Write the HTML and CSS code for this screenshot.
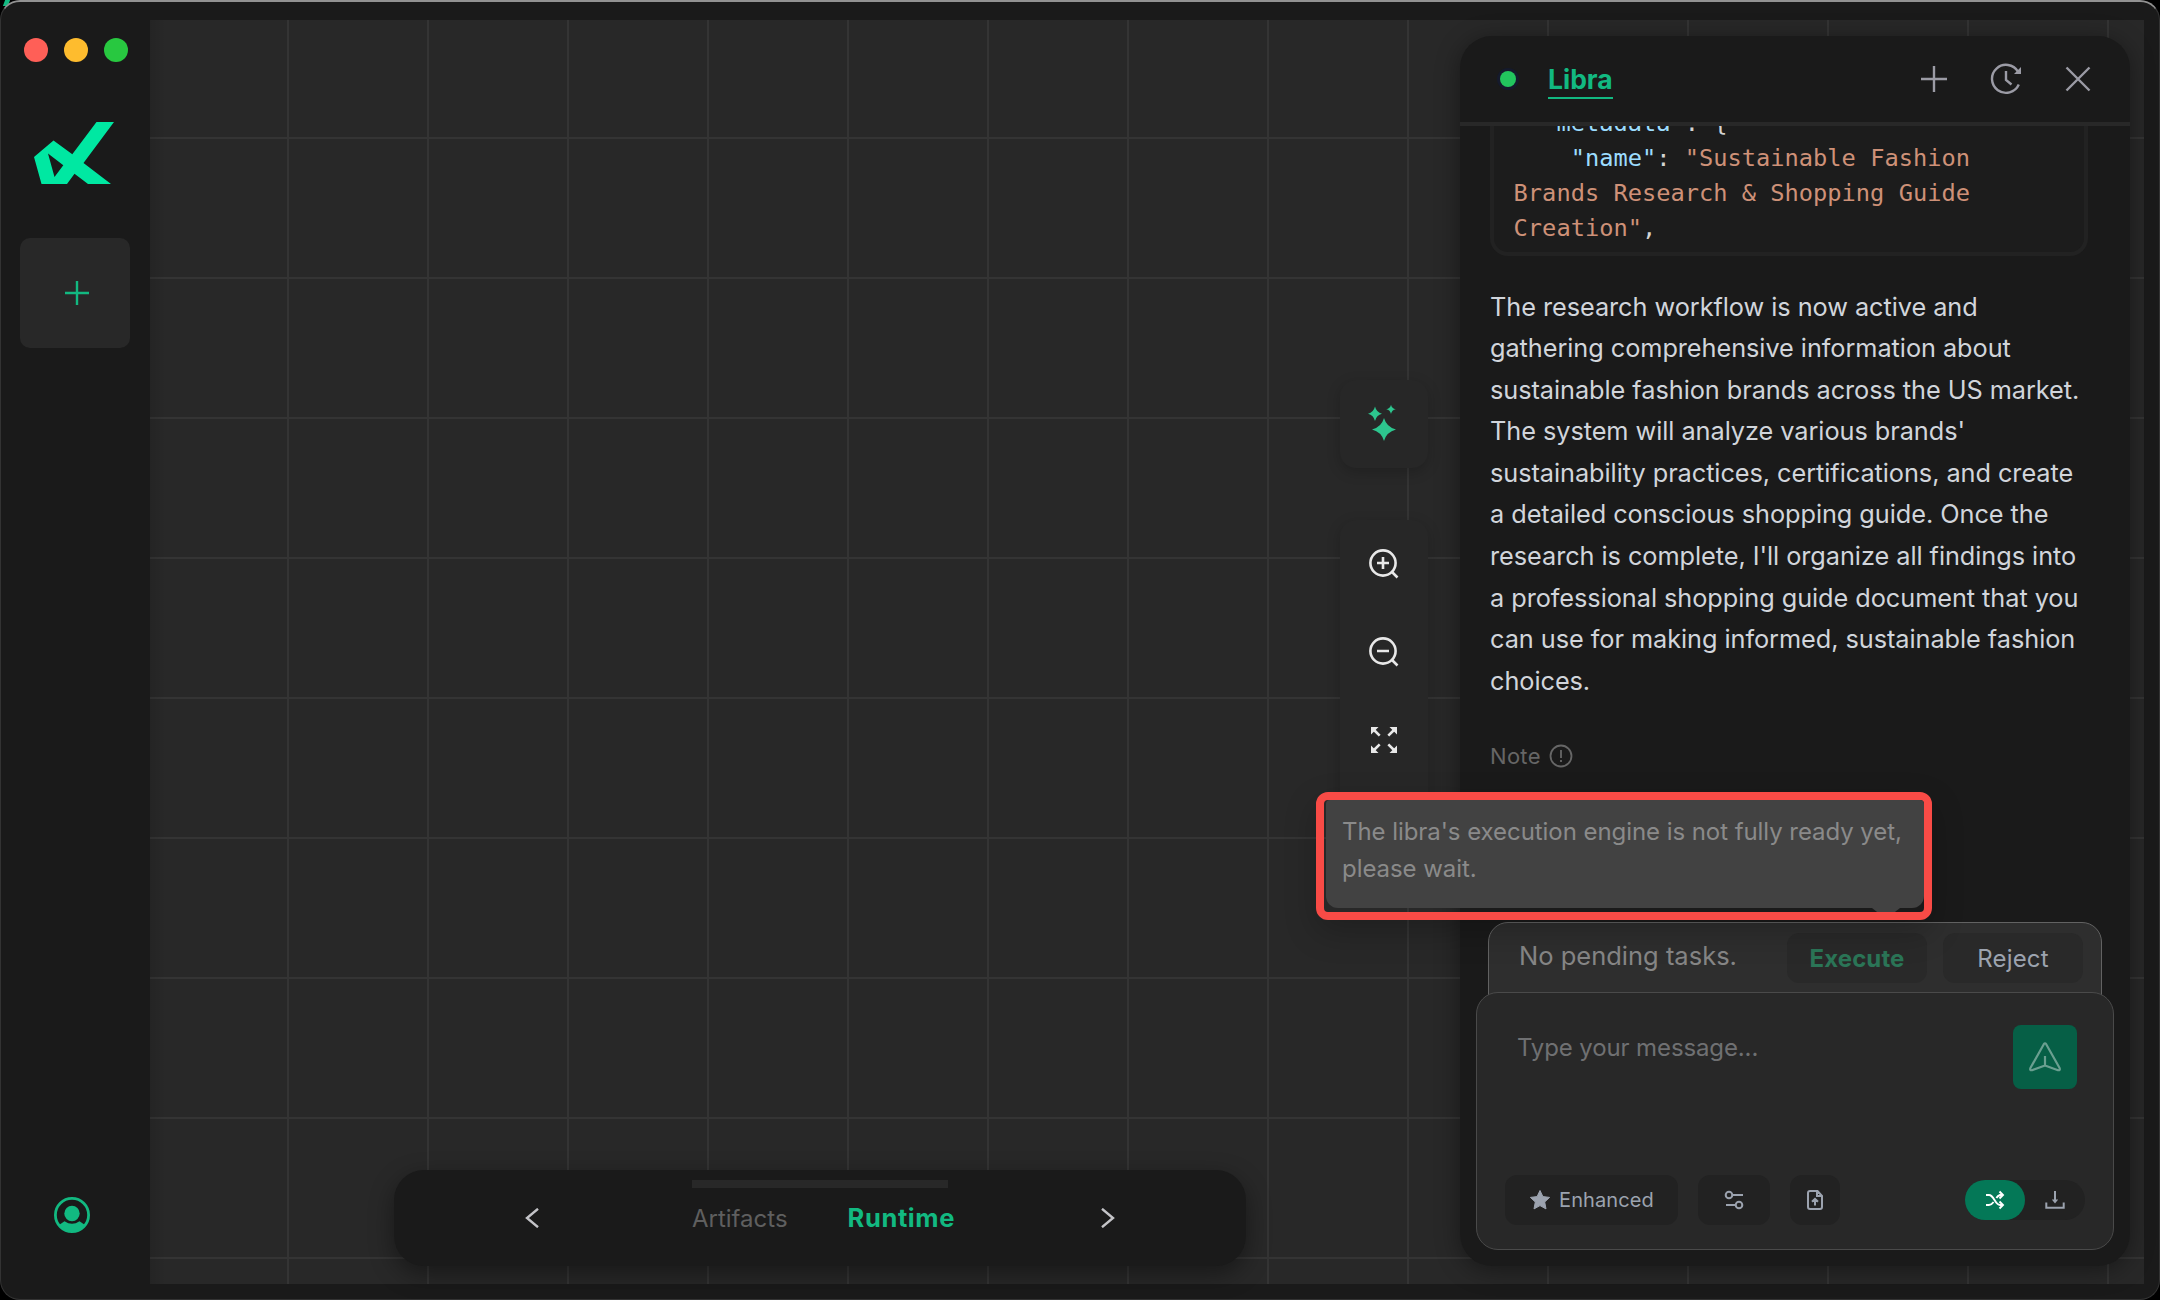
FILE: index.html
```html
<!DOCTYPE html>
<html lang="en">
<head>
<meta charset="utf-8">
<title>Libra</title>
<link rel="stylesheet" href="styles.css">
</head>
<body>
<div class="backdrop-mark"></div>
<div class="window">
  <aside class="sidebar">
    <div class="lights"><i class="red"></i><i class="yellow"></i><i class="green"></i></div>
    <svg class="logo" viewBox="34 122 80 62" width="80" height="62"><path fill="#00e8a2" fill-rule="evenodd" d="M96.5 122H114L83.5 163 111 184H88L74.5 173.7 67 184H41.5L34 157 53.5 140.5 72.3 154.3ZM48 153.5 54.5 177 63.3 165.3Z"/></svg>
    <button class="new-tab"><svg width="26" height="26" viewBox="0 0 26 26"><path d="M13 1v24M1 13h24" stroke="#12b981" stroke-width="2.4"/></svg></button>
    <svg class="avatar" width="36" height="36" viewBox="0 0 36 36"><circle cx="18" cy="18" r="16.6" fill="none" stroke="#12b981" stroke-width="2.8"/><circle cx="18" cy="16.5" r="7.7" fill="#12b981"/><path fill="#12b981" d="M5 28 10.5 24.2Q18 29.5 25.5 24.2L31 28Q26 35 18 35T5 28Z"/></svg>
  </aside>

  <main class="canvas">
    <div class="tools tools-ai">
      <svg width="30" height="38" viewBox="0 0 30 38" fill="#2dc58e"><path d="M17 14Q19.500 23 29 25.500 19.500 28 17 37 14.500 28 5 25.500 14.500 23 17 14Z"/><path d="M8 2.500Q9.400 8.300 15 9.700 9.400 11.100 8 17 6.600 11.100 1 9.700 6.600 8.300 8 2.500Z"/><path d="M24 .7Q24.800 4.400 28.800 5.200 24.800 6 24 10 23.200 6 19.200 5.200 23.200 4.400 24 .7Z"/></svg>
    </div>
    <div class="tools tools-view">
      <span><svg width="32" height="32" viewBox="0 0 32 32"><path d="M23.500 23.500 29.500 29.500M15 9v12M9 15h12" /><circle cx="15" cy="15" r="12.600"/></svg></span>
      <span><svg width="32" height="32" viewBox="0 0 32 32"><path d="M23.500 23.500 29.500 29.500M9 15h12"/><circle cx="15" cy="15" r="12.600"/></svg></span>
      <span><svg width="28" height="28" viewBox="0 0 28 28"><path d="M4 4 9.700 9.700M24 4 18.300 9.700M4 24 9.700 18.300M24 24 18.300 18.300"/><path class="solid" d="M1 1H8.500L1 8.500ZM27 1V8.500L19.500 1ZM1 27V19.500L8.500 27ZM27 27H19.500L27 19.500Z"/></svg></span>
    </div>

    <nav class="dock">
      <div class="grip"></div>
      <div class="dock-row">
        <svg class="chev" width="14" height="20" viewBox="0 0 14 20"><path d="M13 .8 2 10 13 19.200"/></svg>
        <div class="tabs"><span class="tab">Artifacts</span><span class="tab active">Runtime</span></div>
        <svg class="chev" width="14" height="20" viewBox="0 0 14 20"><path d="M1 .8 12 10 1 19.200"/></svg>
      </div>
    </nav>

    <section class="panel">
      <header class="panel-head">
        <i class="status"></i>
        <h1>Libra</h1>
        <div class="head-actions">
          <svg width="32" height="32" viewBox="0 0 32 32"><path d="M16 3v26M3 16h26"/></svg>
          <svg width="32" height="32" viewBox="0 0 32 32"><path d="M28.800 21.500A14 14 0 1 1 28 8.600M16 8V17L21.500 21.500"/><path fill="#9b9ba5" stroke="none" d="M31 4V11H24Z"/></svg>
          <svg width="32" height="32" viewBox="0 0 32 32"><path d="M4.500 4.500 27.500 27.500M27.500 4.500 4.500 27.500"/></svg>
        </div>
      </header>
      <div class="messages">
        <pre class="code"><b>  "metadata"</b>: {
    <b>"name"</b>: <em>"Sustainable Fashion
Brands Research &amp; Shopping Guide
Creation"</em>,</pre>
        <p class="reply">The research workflow is now active and<br>gathering comprehensive information about<br>sustainable fashion brands across the US market.<br>The system will analyze various brands'<br>sustainability practices, certifications, and create<br>a detailed conscious shopping guide. Once the<br>research is complete, I'll organize all findings into<br>a professional shopping guide document that you<br>can use for making informed, sustainable fashion<br>choices.</p>
        <div class="note">Note <svg width="24" height="24" viewBox="0 0 24 24"><circle cx="12" cy="12" r="10.500"/><path d="M12 6v8M12 16v2"/></svg></div>
      </div>
      <div class="pending">
        <span class="pending-text">No pending tasks.</span>
        <button class="execute">Execute</button>
        <button class="reject">Reject</button>
      </div>
      <div class="composer">
        <div class="composer-top">
          <span class="placeholder">Type your message...</span>
          <button class="send"><svg width="34" height="32" viewBox="0 0 34 32"><path d="M15.800 3.200Q17 1.500 18.200 3.200L31.600 27Q32.500 29.500 30 29.200L17 24.500 4 29.200Q1.500 29.500 2.400 27ZM17 15V24"/></svg></button>
        </div>
        <div class="composer-bar">
          <button class="chip enhanced"><svg width="22" height="22" viewBox="0 0 22 22"><path d="M11 1.500 13.900 7.600 20.600 8.400 15.700 13 17 19.900 11 16.600 5 19.900 6.300 13 1.400 8.400 8.100 7.600Z"/></svg>Enhanced</button>
          <button class="chip sliders"><svg width="20" height="20" viewBox="0 0 20 20"><circle cx="5" cy="5" r="3.300"/><path d="M8.500 5H19M2 15H11.500"/><circle cx="15" cy="15" r="3.300"/></svg></button>
          <button class="chip upload"><svg width="18" height="22" viewBox="0 0 18 22"><path d="M11.500 2H4Q2 2 2 4V18Q2 20 4 20H14Q16 20 16 18V7ZM11 2.500V7H15.500M9 16.500V10.500M6 12.800 9 9.800 12 12.800"/></svg></button>
          <div class="toggle">
            <span class="on"><svg width="20" height="20" viewBox="0 0 20 20"><path d="M1 5H4C9 5 10 15 15 15H17.500M1 15H4C6 15 7.500 13.500 8.600 12M11.400 8C12.400 6.300 13.500 5.500 15 5H17.500M14.500 1.500 18 5 14.500 8.500M14.500 11.500 18 15 14.500 18.500"/></svg></span>
            <span class="off"><svg width="20" height="20" viewBox="0 0 20 20"><path d="M1.300 12.500V17.800H18.700V12.500M10 1V12"/><path fill="#9ca3af" stroke="none" d="M6.800 9.500H13.200L10 13.500Z"/></svg></span>
          </div>
        </div>
      </div>
    </section>

    <div class="callout">
      <div class="tooltip">The libra's execution engine is not fully ready yet,<br>please wait.</div>
      <i class="arrow"></i>
    </div>
  </main>
</div>
</body>
</html>
```
FILE: styles.css
```css
* { box-sizing: border-box; }
body { margin: 0; background: #000; font-family: Inter, "Liberation Sans", sans-serif; }
button { border: 0; padding: 0; font: inherit; color: inherit; background: none; display: flex; align-items: center; justify-content: center; }
svg { display: block; flex: none; }

.backdrop-mark { position: absolute; left: 4px; top: 0; width: 5px; height: 6px; background: #12b981; transform: skewX(-20deg); }

.window {
  position: relative;
  height: 1300px; padding: 18px 15px 15px 0;
  border: 1px solid #333; border-top: 2px solid #929292; border-radius: 20px;
  background: #1a1a1a; display: flex; overflow: hidden;
}

.sidebar { width: 149px; flex: none; display: flex; flex-direction: column; align-items: flex-start; }
.lights { display: flex; gap: 16px; margin: 18px 0 0 23px; }
.lights i { width: 24px; height: 24px; border-radius: 50%; }
.red { background: #ff5f57; }
.yellow { background: #febc2e; }
.green { background: #28c840; }
.logo { margin: 60px 0 0 33px; }
.new-tab { width: 110px; height: 110px; margin: 54px 0 0 19px; padding-left: 4px; border-radius: 10px; background: #282828; }
.avatar { margin: auto 0 51px 53px; }

.canvas {
  flex: 1; position: relative;
  background-color: #282828;
  background-image:
    linear-gradient(90deg, rgba(0,0,0,.1), transparent 16px),
    linear-gradient(90deg, #343434 2px, transparent 2px),
    linear-gradient(#343434 2px, transparent 2px);
  background-size: 100% 100%, 140px 140px, 140px 140px;
  background-position: 0 0, 137px 0, 0 117px;
}

.tools { position: absolute; left: 1190px; width: 88px; border-radius: 16px; background: #272727; box-shadow: 0 4px 14px rgba(0,0,0,.2); }
.tools-ai { top: 360px; height: 88px; display: grid; place-items: center; }
.tools-ai svg { margin: 0 4px 2px 0; }
.tools-view { top: 500px; height: 352px; }
.tools-view span { height: 88px; display: grid; place-items: center; }
.tools-view path, .tools-view circle { fill: none; stroke: #e8e8e8; stroke-width: 2.6; }
.tools-view .solid { fill: #e8e8e8; stroke: none; }

.dock {
  position: absolute; left: 244px; top: 1150px; width: 852px; height: 96px; border-radius: 30px;
  background: #1a1a1a; box-shadow: 0 8px 24px rgba(0,0,0,.4); padding: 10px 131px 0;
}
.grip { width: 256px; height: 8px; margin-left: 167px; background: #282828; }
.dock-row { height: 60px; display: flex; align-items: center; justify-content: space-between; }
.chev path { fill: none; stroke: #c4c4c8; stroke-width: 2.4; }
.tabs { display: flex; align-items: baseline; gap: 60px; margin: -2px 0 0 7px; }
.tab { font-size: 24px; color: #5f5f5f; }
.tab.active { font-size: 25.500px; font-weight: 650; letter-spacing: .6px; color: #12b981; }

.panel {
  position: absolute; left: 1310px; top: 16px; width: 670px; height: 1230px; border-radius: 32px;
  background: #1a1a1a; box-shadow: 0 4px 24px rgba(0,0,0,.4);
  display: flex; flex-direction: column; overflow: hidden;
}
.panel-head { height: 90px; flex: none; border-bottom: 4px solid #282828; display: flex; align-items: center; padding: 0 36px 0 40px; }
.status { width: 16px; height: 16px; border-radius: 50%; background: #22c55e; box-shadow: 0 0 0 3px #151a2c; }
h1 { margin: 3px 0 0 32px; font-size: 26.500px; line-height: 35px; font-weight: 700; letter-spacing: 0; color: #12b981; border-bottom: 2px solid #12b981; }
.head-actions { margin-left: auto; display: flex; gap: 40px; }
.head-actions path { fill: none; stroke: #9b9ba5; stroke-width: 2.400; }
.head-actions path[fill] { fill: #9b9ba5; stroke: none; }

.messages { flex: 1; min-height: 0; overflow: hidden; padding: 0 42px 0 30px; }
.code {
  margin: 0; height: 130px; padding: 0 0 0 19.600px; border: 4px solid #222; border-top: 0; border-radius: 0 0 18px 18px;
  background: #1c1c1c; color: #d4d4d4; font: 23.700px/35px "DejaVu Sans Mono", monospace;
  white-space: pre; overflow: hidden;
}
.code::before { content: ""; display: block; margin-top: -20px; }
.code b { font-weight: 400; color: #9cdcfe; }
.code em { font-style: normal; color: #ce9178; }
.reply { margin: 29.500px 0 0; font-size: 25.300px; line-height: 41.600px; letter-spacing: -.055px; color: #d1d5db; white-space: nowrap; }
.note { margin-top: 37.500px; height: 34px; display: flex; align-items: center; gap: 8px; font-size: 22px; letter-spacing: .3px; color: #666; }
.note circle, .note path { fill: none; stroke: #666; stroke-width: 1.8; }

.pending {
  width: 614px; height: 88px; margin: 0 0 -18px 28px; flex: none; padding: 10px 18px 0 30px;
  border: 1px solid #626262; border-radius: 20px 20px 0 0; background: #2e2e2e; display: flex; align-items: flex-start;
}
.pending-text { font-size: 25.500px; line-height: 45px; letter-spacing: 0; color: #868686; margin-right: auto; }
.pending button { width: 140px; height: 50px; border-radius: 12px; background: #292929; font-size: 24px; }
.pending .execute { font-weight: 700; letter-spacing: .1px; color: #2b7557; margin-right: 16px; }
.reject { letter-spacing: .2px; color: #9ca3af; }

.composer {
  position: relative; width: 638px; height: 258px; margin: 0 0 16px 16px; flex: none;
  border: 1px solid #4a4a4a; border-radius: 22px; background: #282828;
  padding: 32px 28px 24px; display: flex; flex-direction: column; justify-content: space-between;
}
.composer-top { display: flex; justify-content: space-between; align-items: flex-start; padding: 0 8px 0 12px; }
.placeholder { font-size: 24px; line-height: 46px; letter-spacing: -.12px; color: #6f7072; }
.send { width: 64px; height: 64px; border-radius: 8px; background: #065f46; }
.send path { fill: none; stroke: #6a9f90; stroke-width: 2.2; stroke-linejoin: round; }
.composer-bar { display: flex; align-items: center; }
.chip { height: 50px; border-radius: 12px; background: #222; color: #9ca3af; }
.chip path, .chip circle { fill: none; stroke: #9ca3af; stroke-width: 2; }
.enhanced { width: 173px; font-size: 20px; letter-spacing: .1px; gap: 8px; margin-right: 20px; }
.chip.enhanced path { fill: #9ca3af; stroke-width: 1; stroke-linejoin: round; }
.sliders { width: 72px; margin-right: 20px; }
.upload { width: 50px; }
.toggle { margin-left: auto; width: 120px; height: 40px; border-radius: 20px; background: #222; display: flex; }
.toggle span { width: 60px; height: 40px; display: grid; place-items: center; }
.on { border-radius: 20px; background: #047857; }
.on path { fill: none; stroke: #fff; stroke-width: 1.9; }
.off path { fill: none; stroke: #9ca3af; stroke-width: 2; }
.off path[fill] { fill: #9ca3af; stroke: none; }

.callout { position: absolute; left: 1166px; top: 772px; width: 616px; height: 128px; border: 8px solid #f94b46; border-radius: 12px; box-shadow: 0 12px 32px rgba(0,0,0,.22); padding-left: 2px; overflow: visible; }
.tooltip { height: 108px; padding: 13px 0 0 16px; border-radius: 4px 4px 12px 12px; background: #424242; color: #8a8a8a; font-size: 24px; line-height: 37px; letter-spacing: -.06px; white-space: nowrap; }
.arrow { display: block; width: 28px; height: 4px; margin-left: 546px; background: #424242; clip-path: polygon(0 0, 100% 0, 82% 100%, 18% 100%); }
```
